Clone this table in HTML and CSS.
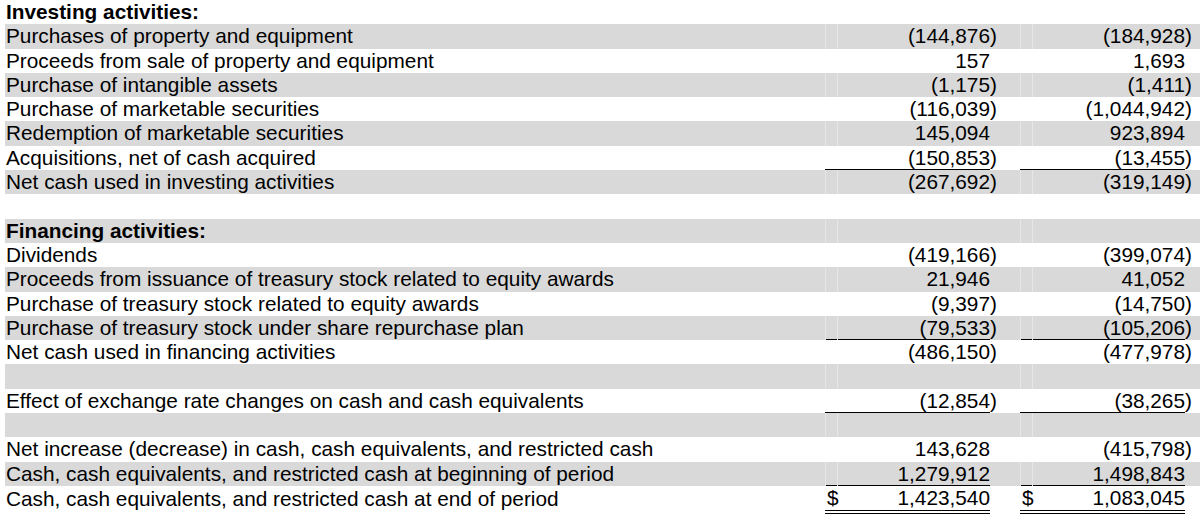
FILE: index.html
```html
<!DOCTYPE html>
<html lang="en">
<head>
<meta charset="utf-8">
<title>Cash flows — investing and financing activities</title>
<link rel="stylesheet" href="styles.css">
</head>
<body>
<table class="cf">
  <colgroup>
    <col class="c-label"><col class="c-cur"><col class="c-num"><col class="c-par1">
    <col class="c-cur"><col class="c-num"><col class="c-par2">
  </colgroup>
  <tbody>
    <tr><td class="label head">Investing activities:</td><td></td><td></td><td></td><td></td><td></td><td></td></tr>
    <tr class="sh"><td class="label">Purchases of property and equipment</td><td class="cur"></td><td class="num">(144,876</td><td class="par">)</td><td class="cur"></td><td class="num">(184,928</td><td class="par">)</td></tr>
    <tr><td class="label">Proceeds from sale of property and equipment</td><td class="cur"></td><td class="num">157</td><td class="par"></td><td class="cur"></td><td class="num">1,693</td><td class="par"></td></tr>
    <tr class="sh"><td class="label">Purchase of intangible assets</td><td class="cur"></td><td class="num">(1,175</td><td class="par">)</td><td class="cur"></td><td class="num">(1,411</td><td class="par">)</td></tr>
    <tr><td class="label">Purchase of marketable securities</td><td class="cur"></td><td class="num">(116,039</td><td class="par">)</td><td class="cur"></td><td class="num">(1,044,942</td><td class="par">)</td></tr>
    <tr class="sh"><td class="label">Redemption of marketable securities</td><td class="cur"></td><td class="num">145,094</td><td class="par"></td><td class="cur"></td><td class="num">923,894</td><td class="par"></td></tr>
    <tr class="ul"><td class="label">Acquisitions, net of cash acquired</td><td class="cur"></td><td class="num">(150,853</td><td class="par">)</td><td class="cur"></td><td class="num">(13,455</td><td class="par">)</td></tr>
    <tr class="sh"><td class="label">Net cash used in investing activities</td><td class="cur"></td><td class="num">(267,692</td><td class="par">)</td><td class="cur"></td><td class="num">(319,149</td><td class="par">)</td></tr>
    <tr><td class="label"></td><td></td><td></td><td></td><td></td><td></td><td></td></tr>
    <tr class="sh"><td class="label head">Financing activities:</td><td class="cur"></td><td class="num"></td><td class="par"></td><td class="cur"></td><td class="num"></td><td class="par"></td></tr>
    <tr><td class="label">Dividends</td><td class="cur"></td><td class="num">(419,166</td><td class="par">)</td><td class="cur"></td><td class="num">(399,074</td><td class="par">)</td></tr>
    <tr class="sh"><td class="label">Proceeds from issuance of treasury stock related to equity awards</td><td class="cur"></td><td class="num">21,946</td><td class="par"></td><td class="cur"></td><td class="num">41,052</td><td class="par"></td></tr>
    <tr><td class="label">Purchase of treasury stock related to equity awards</td><td class="cur"></td><td class="num">(9,397</td><td class="par">)</td><td class="cur"></td><td class="num">(14,750</td><td class="par">)</td></tr>
    <tr class="sh ul"><td class="label">Purchase of treasury stock under share repurchase plan</td><td class="cur"></td><td class="num">(79,533</td><td class="par">)</td><td class="cur"></td><td class="num">(105,206</td><td class="par">)</td></tr>
    <tr><td class="label">Net cash used in financing activities</td><td class="cur"></td><td class="num">(486,150</td><td class="par">)</td><td class="cur"></td><td class="num">(477,978</td><td class="par">)</td></tr>
    <tr class="sh"><td class="label"></td><td class="cur"></td><td class="num"></td><td class="par"></td><td class="cur"></td><td class="num"></td><td class="par"></td></tr>
    <tr class="ul"><td class="label">Effect of exchange rate changes on cash and cash equivalents</td><td class="cur"></td><td class="num">(12,854</td><td class="par">)</td><td class="cur"></td><td class="num">(38,265</td><td class="par">)</td></tr>
    <tr class="sh"><td class="label"></td><td class="cur"></td><td class="num"></td><td class="par"></td><td class="cur"></td><td class="num"></td><td class="par"></td></tr>
    <tr><td class="label">Net increase (decrease) in cash, cash equivalents, and restricted cash</td><td class="cur"></td><td class="num">143,628</td><td class="par"></td><td class="cur"></td><td class="num">(415,798</td><td class="par">)</td></tr>
    <tr class="sh ul"><td class="label">Cash, cash equivalents, and restricted cash at beginning of period</td><td class="cur"></td><td class="num">1,279,912</td><td class="par"></td><td class="cur"></td><td class="num">1,498,843</td><td class="par"></td></tr>
    <tr class="dul"><td class="label">Cash, cash equivalents, and restricted cash at end of period</td><td class="cur">$</td><td class="num">1,423,540</td><td class="par"></td><td class="cur">$</td><td class="num">1,083,045</td><td class="par"></td></tr>
  </tbody>
</table>
</body>
</html>
```

FILE: styles.css
```css
html, body {
  margin: 0;
  padding: 0;
  background: #ffffff;
}

body {
  font-family: "Liberation Sans", Arial, Helvetica, sans-serif;
  font-size: 20.8px;
  color: #000000;
}

.cf {
  margin: 0 0 0 5px;
  border-collapse: collapse;
  border-spacing: 0;
  table-layout: fixed;
  width: 1195px;
}

.c-label { width: 820px; }
.c-cur { width: 12px; }
.c-num { width: 153px; }
.c-par1 { width: 30px; }
.c-par2 { width: 15px; }

.cf td {
  height: 24.3px;
  padding: 0;
  line-height: 23.3px;
  padding-bottom: 1px;
  box-sizing: border-box;
  white-space: nowrap;
  vertical-align: middle;
}

.label {
  text-align: left;
}

.cf td.label {
  padding-left: 1px;
}

.head {
  font-weight: bold;
}

.cf td.cur {
  text-align: left;
  padding-left: 2px;
}

.num {
  text-align: right;
}

.par {
  text-align: left;
}

.sh td {
  background: #d9d9d9;
}

.sh td.cur,
.sh td.num {
  box-shadow: inset 1px 0 0 #e6e6e6;
}

.ul td.cur,
.ul td.num {
  box-shadow: inset 0 -1px 0 #000000;
}

.sh.ul td.cur,
.sh.ul td.num {
  box-shadow: inset 1px 0 0 #e6e6e6, inset 0 -1px 0 #000000;
}

.dul td.cur,
.dul td.num {
  border-bottom: 4px double #000000;
}
```
